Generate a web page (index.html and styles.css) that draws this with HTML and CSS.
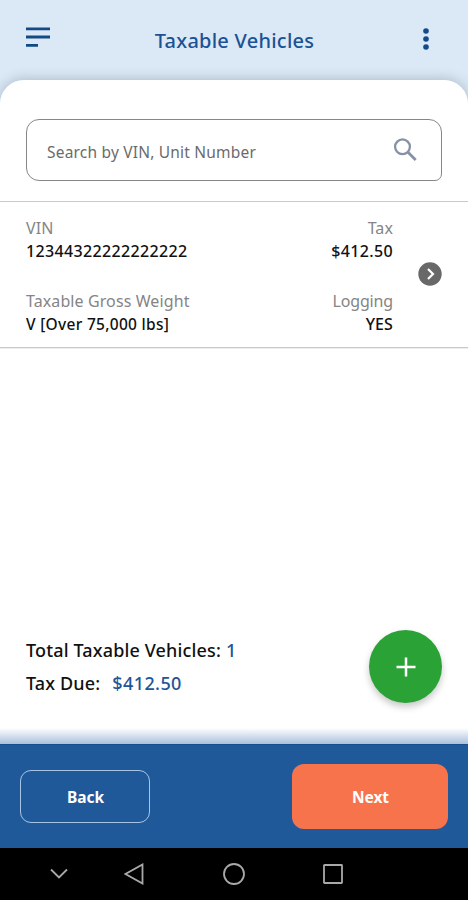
FILE: index.html
```html
<!DOCTYPE html>
<html lang="en">
<head>
<meta charset="utf-8">
<title>Taxable Vehicles</title>
<link rel="stylesheet" href="styles.css">
</head>
<body>
<div class="app">
  <header class="header">
    <svg class="menu-icon" width="24" height="21" viewBox="0 0 24 21"><path d="M0 1.8h24M0 10h24M0 18.4h12" stroke="#124a86" stroke-width="2.8"/></svg>
    <h1 class="title">Taxable Vehicles</h1>
    <svg class="more-icon" width="6" height="22" viewBox="0 0 6 22" fill="#124a8c"><circle cx="3" cy="3" r="2.8"/><circle cx="3" cy="11" r="2.8"/><circle cx="3" cy="19" r="2.8"/></svg>
  </header>
  <main class="sheet">
    <div class="search">
      <span class="placeholder">Search by VIN, Unit Number</span>
      <svg width="24" height="24" viewBox="0 0 24 24" fill="none" stroke="#8691a6"><circle cx="9.5" cy="8.8" r="7.4" stroke-width="2.3"/><path d="M15 14.3l7.7 7.7" stroke-width="2.8"/></svg>
    </div>
    <section class="vehicle">
      <div class="fields">
        <div class="field"><span class="label vin-label">VIN</span><span class="value vin">12344322222222222</span></div>
        <div class="field end"><span class="label tax-label">Tax</span><span class="value amount">$412.50</span></div>
        <div class="field"><span class="label weight-label">Taxable Gross Weight</span><span class="value weight">V [Over 75,000 lbs]</span></div>
        <div class="field end"><span class="label logging-label">Logging</span><span class="value logging">YES</span></div>
      </div>
      <svg class="go" width="24" height="24" viewBox="0 0 24 24"><circle cx="12" cy="12" r="11.7" fill="#686868"/><path d="M10 7l5 5-5 5" fill="none" stroke="#fff" stroke-width="2.2"/></svg>
    </section>
    <section class="summary">
      <div class="totals">
        <div class="total"><span class="total-name">Total Taxable Vehicles:</span><span class="total-value count">1</span></div>
        <div class="total"><span class="total-name due-name">Tax Due:</span><span class="total-value due">$412.50</span></div>
      </div>
      <div class="add"><svg width="20" height="20" viewBox="0 0 20 20"><path d="M10 .5v19M.5 10h19" stroke="#fff" stroke-width="2.5"/></svg></div>
    </section>
  </main>
  <footer class="actions">
    <div class="button back"><span>Back</span></div>
    <div class="button next"><span>Next</span></div>
  </footer>
  <nav class="system">
    <svg width="18" height="12" viewBox="0 0 18 12"><path d="M1 1.5l8 8 8-8"/></svg>
    <svg width="20" height="22" viewBox="0 0 20 22"><path d="M18.5 1.5v19L1.5 11z"/></svg>
    <svg width="22" height="22" viewBox="0 0 22 22"><circle cx="11" cy="11" r="10"/></svg>
    <svg width="20" height="20" viewBox="0 0 20 20"><rect x="1" y="1" width="18" height="18" rx=".5"/></svg>
  </nav>
</div>
</body>
</html>
```
FILE: styles.css
```css
* { box-sizing: border-box; }
body { margin: 0; font-family: "Noto Sans", sans-serif; color: #111; }
svg { display: block; flex: none; }
.app { width: 468px; height: 900px; display: flex; flex-direction: column; background: #dbe8f5; overflow: hidden; }
.header { height: 80px; padding: 0 39px 0 26px; display: flex; justify-content: space-between; align-items: flex-start; }
.menu-icon { margin-top: 27px; }
.more-icon { margin-top: 28px; }
.title { margin: 27px 0 0 -4px; font-size: 20px; line-height: 28px; font-weight: 500; letter-spacing: .25px; color: #1c5294; white-space: nowrap; }
.sheet { height: 664px; display: flex; flex-direction: column; padding-top: 39px; background: linear-gradient(#fff 648px, #e5ebf4 653px, #a9c0dc 664px); border-radius: 24px 24px 0 0; box-shadow: 0 -1px 12px rgba(60, 80, 105, .3); }
.search { flex: none; height: 62px; margin: 0 26px; padding: 0 24px 0 20px; display: flex; align-items: center; justify-content: space-between; border: 1px solid #868686; border-radius: 13px 13px 7px 13px; }
.placeholder { font-size: 15.5px; line-height: 22px; letter-spacing: .2px; color: #6b6b6b; margin-top: 3px; }
.vehicle { flex: none; height: 147px; margin-top: 20px; padding: 15px 26px 0; display: flex; border-top: 1px solid #c9c9c9; border-bottom: 1px solid #c9c9c9; box-shadow: 0 1px #eee; }
.fields { width: 367px; display: grid; grid-template-columns: auto auto; grid-template-rows: 73px 50px; }
.field { display: flex; flex-direction: column; align-items: flex-start; line-height: 23px; white-space: nowrap; }
.field.end { align-items: flex-end; }
.label { font-size: 16px; letter-spacing: .1px; color: #858585; }
.logging-label { letter-spacing: -.15px; }
.value { font-size: 16px; font-weight: 500; letter-spacing: .35px; color: #111; }
.weight { font-size: 15.5px; letter-spacing: .3px; }
.logging { letter-spacing: .1px; }
.go { margin: 45px 0 0 25px; }
.summary { margin: 282px 26px 0; display: flex; justify-content: space-between; }
.totals { padding-top: 4px; }
.total { display: flex; height: 33px; line-height: 33px; white-space: nowrap; font-size: 18px; font-weight: 500; letter-spacing: .15px; }
.total-value { color: #205596; margin-left: 5px; }
.due { margin-left: 12px; letter-spacing: .4px; }
.add { width: 73px; height: 73px; border-radius: 50%; display: flex; align-items: center; justify-content: center; background: #2aa235; box-shadow: 0 4px 7px rgba(0, 0, 0, .22); }
.actions { height: 104px; padding: 0 20px; display: flex; align-items: center; justify-content: space-between; background: #20599a; border-top: 1px solid #164d8c; }
.button { display: flex; align-items: center; justify-content: center; color: #fff; font-size: 15.5px; font-weight: 700; letter-spacing: -.1px; padding-left: 1px; }
.back { width: 130px; height: 53px; border: 1.5px solid #a7c5e4; border-radius: 11px; }
.next { width: 156px; height: 65px; border-radius: 12px; background: #f7734b; }
.system { height: 52px; padding: 0 124px 0 50px; display: grid; grid-template-columns: 74px 99px 100px 20px; align-items: center; background: #000; fill: none; stroke: #a9a9a9; stroke-width: 1.8; }
```
